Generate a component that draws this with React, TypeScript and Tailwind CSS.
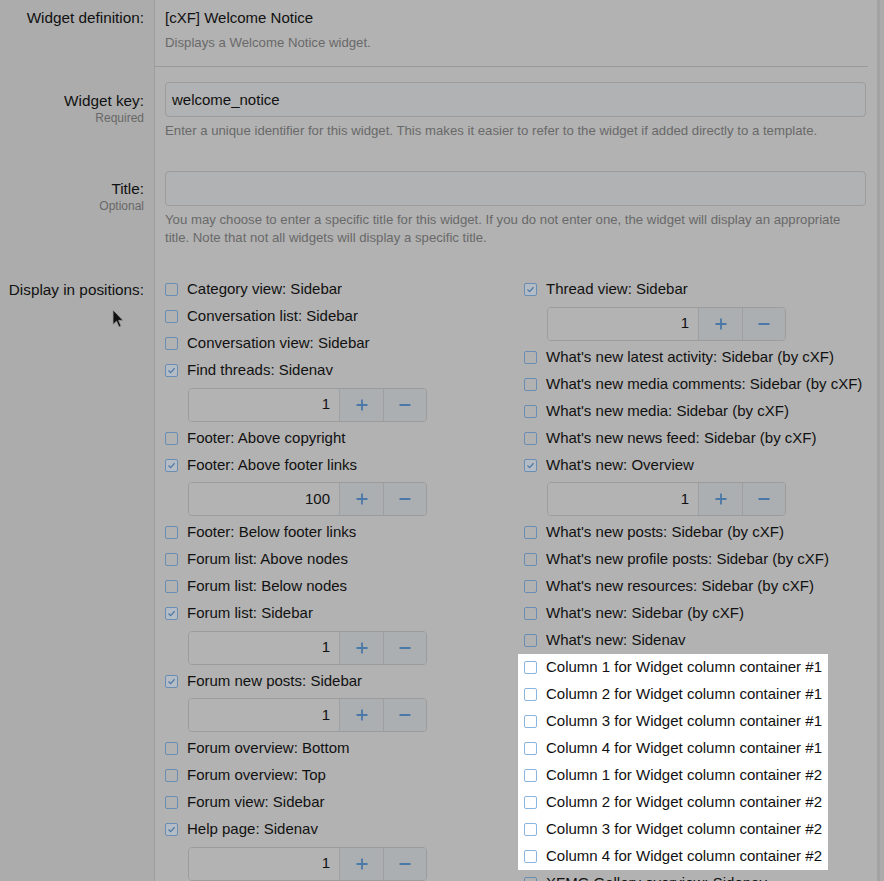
import React from "react";

type Position = {
  label: string;
  checked?: boolean;
  order?: string;
};

const leftPositions: Position[] = [
  { label: "Category view: Sidebar" },
  { label: "Conversation list: Sidebar" },
  { label: "Conversation view: Sidebar" },
  { label: "Find threads: Sidenav", checked: true, order: "1" },
  { label: "Footer: Above copyright" },
  { label: "Footer: Above footer links", checked: true, order: "100" },
  { label: "Footer: Below footer links" },
  { label: "Forum list: Above nodes" },
  { label: "Forum list: Below nodes" },
  { label: "Forum list: Sidebar", checked: true, order: "1" },
  { label: "Forum new posts: Sidebar", checked: true, order: "1" },
  { label: "Forum overview: Bottom" },
  { label: "Forum overview: Top" },
  { label: "Forum view: Sidebar" },
  { label: "Help page: Sidenav", checked: true, order: "1" },
];

const rightPositions: Position[] = [
  { label: "Thread view: Sidebar", checked: true, order: "1" },
  { label: "What's new latest activity: Sidebar (by cXF)" },
  { label: "What's new media comments: Sidebar (by cXF)" },
  { label: "What's new media: Sidebar (by cXF)" },
  { label: "What's new news feed: Sidebar (by cXF)" },
  { label: "What's new: Overview", checked: true, order: "1" },
  { label: "What's new posts: Sidebar (by cXF)" },
  { label: "What's new profile posts: Sidebar (by cXF)" },
  { label: "What's new resources: Sidebar (by cXF)" },
  { label: "What's new: Sidebar (by cXF)" },
  { label: "What's new: Sidenav" },
];

// rows the screenshot keeps bright (not under the dim overlay)
const columnPositions = [
  "Column 1 for Widget column container #1",
  "Column 2 for Widget column container #1",
  "Column 3 for Widget column container #1",
  "Column 4 for Widget column container #1",
  "Column 1 for Widget column container #2",
  "Column 2 for Widget column container #2",
  "Column 3 for Widget column container #2",
  "Column 4 for Widget column container #2",
];

function CheckBox({ checked, bright }: { checked?: boolean; bright?: boolean }) {
  return (
    <span
      className={
        bright
          ? "w-[13px] h-[13px] shrink-0 rounded-[2px] border border-[#8ab5e0] bg-white"
          : checked
            ? "w-[13px] h-[13px] shrink-0 rounded-[2px] border border-[#6a8db3] bg-[#b4bcc5] flex items-center justify-center"
            : "w-[13px] h-[13px] shrink-0 rounded-[2px] border border-[#6a8db3]"
      }
    >
      {checked && (
        <svg width="11" height="11" viewBox="0 0 11 11">
          <path d="M2.5 5.5 L4.6 7.6 L8.6 3.2" fill="none" stroke="#4f79a6" strokeWidth="1.3" />
        </svg>
      )}
    </span>
  );
}

function Stepper({ value }: { value: string }) {
  return (
    <div className="ml-[23px] mt-[3.5px] mb-[3px] h-[34px] w-[239px] flex rounded-[4px] border border-[#9c9c9c] overflow-hidden">
      <div className="w-[150px] bg-[#b3b3b3] flex items-center justify-end pr-[9px] text-[15px] text-[#111]">
        {value}
      </div>
      <div className="w-[44px] bg-[#acafb2] border-l border-[#a0a0a0] flex items-center justify-center">
        <svg width="14" height="14" viewBox="0 0 14 14">
          <path d="M7 1.5 V12.5 M1.5 7 H12.5" stroke="#4a78a8" strokeWidth="1.8" />
        </svg>
      </div>
      <div className="flex-1 bg-[#acafb2] border-l border-[#a0a0a0] flex items-center justify-center">
        <svg width="14" height="14" viewBox="0 0 14 14">
          <path d="M1.5 7 H12.5" stroke="#4a78a8" strokeWidth="1.8" />
        </svg>
      </div>
    </div>
  );
}

function PositionRow({ pos }: { pos: Position }) {
  return (
    <>
      <div className="h-[27px] flex items-center gap-[9px]">
        <CheckBox checked={pos.checked} />
        <span className="text-[15px] text-[#111] whitespace-nowrap">{pos.label}</span>
      </div>
      {pos.order && <Stepper value={pos.order} />}
    </>
  );
}

function Label({ text, sub, top }: { text: string; sub?: string; top: string }) {
  return (
    <div className={`w-[155px] shrink-0 bg-[#acacac] border-r border-[#9d9d9d] pr-[10px] text-right ${top}`}>
      <div className="text-[15.3px] leading-[18px] text-[#111]">{text}</div>
      {sub && <div className="text-[12px] leading-[16px] text-[#686868]">{sub}</div>}
    </div>
  );
}

export default function App() {
  return (
    <div
      className="relative h-[881px] w-[884px] overflow-hidden flex bg-[#b2b2b2]"
      style={{ fontFamily: '"Liberation Sans", Arial, sans-serif' }}
    >
      <div className="w-[877px] flex flex-col">
        {/* Widget definition */}
        <div className="flex">
          <Label text="Widget definition:" top="pt-[9px]" />
          <div className="flex-1 pl-[10px] mr-[9px] pt-[9px] pb-[14px] border-b border-[#999]">
            <div className="text-[15px] leading-[18px] text-[#111]">[cXF] Welcome Notice</div>
            <div className="mt-[7px] text-[13.2px] leading-[18px] text-[#696969]">
              Displays a Welcome Notice widget.
            </div>
          </div>
        </div>

        {/* Widget key */}
        <div className="flex">
          <Label text="Widget key:" sub="Required" top="pt-[25px]" />
          <div className="flex-1 pl-[10px] pr-[11px] pt-[15px]">
            <div className="h-[35px] rounded-[4px] border border-[#9c9c9c] bg-[#b1b2b3] flex items-center px-[6px] pt-[1px] text-[15px] text-[#111]">
              welcome_notice
            </div>
            <div className="mt-[5px] text-[13.2px] leading-[18px] text-[#696969]">
              Enter a unique identifier for this widget. This makes it easier to refer to the widget if added directly to a template.
            </div>
          </div>
        </div>

        {/* Title */}
        <div className="flex">
          <Label text="Title:" sub="Optional" top="pt-[40px]" />
          <div className="flex-1 pl-[10px] pr-[11px] pt-[31px]">
            <div className="h-[35px] rounded-[4px] border border-[#9c9c9c] bg-[#b1b2b3]" />
            <div className="mt-[5px] text-[13.2px] leading-[18px] text-[#696969] whitespace-nowrap">
              You may choose to enter a specific title for this widget. If you do not enter one, the widget will display an appropriate
              <br />
              title. Note that not all widgets will display a specific title.
            </div>
          </div>
        </div>

        {/* Display in positions */}
        <div className="flex flex-1">
          <Label text="Display in positions:" top="pt-[34px]" />
          <div className="flex-1 pl-[10px] pt-[29px] grid grid-cols-[342px_342px] gap-x-[17px] items-start">
            <div className="flex flex-col">
              {leftPositions.map((p) => (
                <PositionRow key={p.label} pos={p} />
              ))}
            </div>
            <div className="flex flex-col">
              {rightPositions.map((p) => (
                <PositionRow key={p.label} pos={p} />
              ))}
              <div className="w-fit -ml-[6px] px-[6px] bg-white">
                {columnPositions.map((label) => (
                  <div key={label} className="h-[27px] flex items-center gap-[9px]">
                    <CheckBox bright />
                    <span className="text-[15px] text-[#111] whitespace-nowrap">{label}</span>
                  </div>
                ))}
              </div>
              <PositionRow pos={{ label: "XFMG Gallery overview: Sidenav" }} />
            </div>
          </div>
        </div>
      </div>

      {/* window edge */}
      <div className="w-[3px] bg-[#a3a3a3]" />
      <div className="flex-1 bg-[#ababab]" />

      {/* mouse pointer */}
      <svg className="absolute left-[112px] top-[309px]" width="13" height="20" viewBox="0 0 13 20">
        <path d="M1 1 L1 15.5 L4.5 12.2 L7 18 L9 17 L6.6 11.4 L11 11.4 Z" fill="#111" stroke="#9a9a9a" strokeWidth="0.8" />
      </svg>
    </div>
  );
}
